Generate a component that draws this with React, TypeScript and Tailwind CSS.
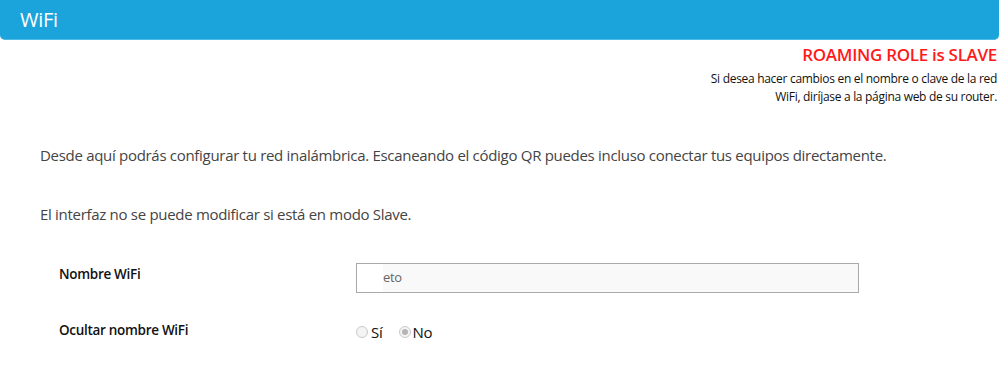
import React from 'react'

const font = { fontFamily: '"Open Sans", "Noto Sans", sans-serif' }

function Radio({ checked }: { checked?: boolean }) {
  return (
    <span className="inline-flex h-[12px] w-[12px] items-center justify-center rounded-full border border-[#c9c9c9] bg-[#f4f4f4]">
      {checked && <span className="h-[6px] w-[6px] rounded-full bg-[#b5b5b5]" />}
    </span>
  )
}

export default function App() {
  return (
    <div className="w-[999px] h-[372px] overflow-hidden bg-white tracking-[-0.3px]" style={font}>
      <div className="h-[40px] rounded-b-[5px] border-b border-[#4db9e6] bg-[#1ba4db] pl-[20px] flex items-center">
        <span className="text-[20px] text-white">WiFi</span>
      </div>

      <div className="flex flex-col items-end pr-[2px] pt-[3px]">
        <div className="text-[17px] font-semibold text-[#ff1a1a] leading-[24px]">ROAMING ROLE is SLAVE</div>
        <div className="mt-[3px] text-right text-[12px] leading-[18px] text-[#111]">
          Si desea hacer cambios en el nombre o clave de la red
          <br />
          WiFi, diríjase a la página web de su router.
        </div>
      </div>

      <div className="pl-[40px] pt-[38px] text-[15px] text-[#444]">
        <p className="leading-[22px]">
          Desde aquí podrás configurar tu red inalámbrica. Escaneando el código QR puedes incluso conectar tus equipos directamente.
        </p>
        <p className="mt-[37px] leading-[22px]">El interfaz no se puede modificar si está en modo Slave.</p>
      </div>

      <div className="mt-[38px] grid grid-cols-[297px_503px] pl-[59px] gap-y-[27px]">
        <div className="text-[13.5px] font-semibold text-[#111] leading-[20px] pt-[1px]">Nombre WiFi</div>
        <div className="h-[30px] border border-[#a9a9a9] bg-[#f9f9f9] flex items-center pl-0 text-[13px] text-[#666]">
          <span className="inline-block h-[28px] w-[26px] bg-white" />
          <span>eto</span>
        </div>
        <div className="text-[13.5px] font-semibold text-[#111] leading-[20px]">Ocultar nombre WiFi</div>
        <div className="flex items-center text-[15px] text-[#111] leading-[20px] pt-[2px]">
          <Radio />
          <span className="ml-[3px]">Sí</span>
          <span className="ml-[17px]" />
          <Radio checked />
          <span className="ml-[1px]">No</span>
        </div>
      </div>
    </div>
  )
}
